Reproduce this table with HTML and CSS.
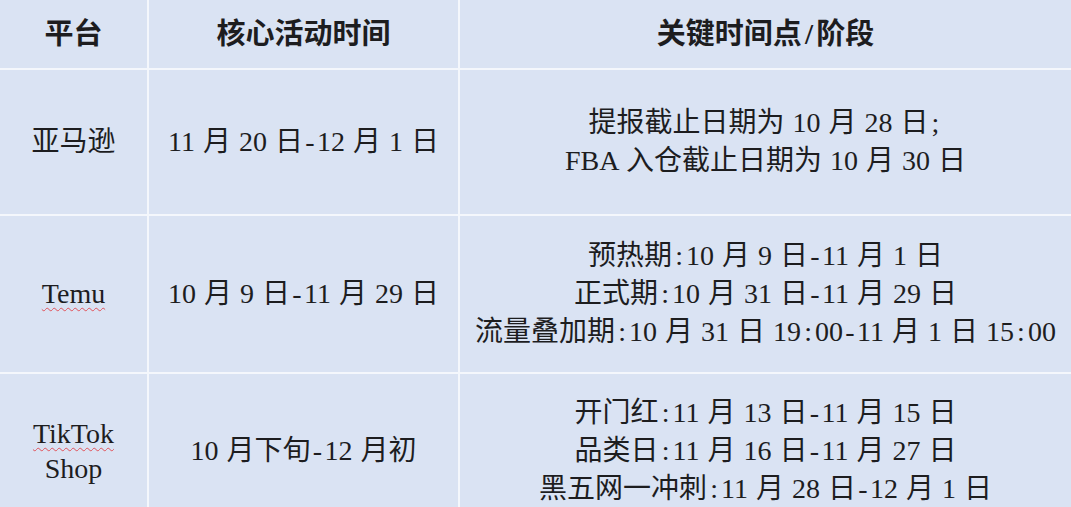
FILE: index.html
```html
<!DOCTYPE html>
<html lang="zh-CN">
<head>
<meta charset="utf-8">
<title>平台活动时间</title>
<link rel="stylesheet" href="styles.css">
</head>
<body>
<div class="table">
  <div class="cell head"><div>平台</div></div>
  <div class="cell head"><div>核心活动时间</div></div>
  <div class="cell head"><div>关键时间点<span class="hw">/</span>阶段</div></div>

  <div class="cell"><div>亚马逊</div></div>
  <div class="cell"><div>11 月 20 日<span class="hw">-</span>12 月 1 日</div></div>
  <div class="cell">
    <div>提报截止日期为 10 月 28 日<span class="hw">;</span></div>
    <div>FBA 入仓截止日期为 10 月 30 日</div>
  </div>

  <div class="cell"><div><span class="spell">Temu</span></div></div>
  <div class="cell"><div>10 月 9 日<span class="hw">-</span>11 月 29 日</div></div>
  <div class="cell">
    <div>预热期<span class="hw">:</span>10 月 9 日<span class="hw">-</span>11 月 1 日</div>
    <div>正式期<span class="hw">:</span>10 月 31 日<span class="hw">-</span>11 月 29 日</div>
    <div>流量叠加期<span class="hw">:</span>10 月 31 日 19<span class="hw">:</span>00<span class="hw">-</span>11 月 1 日 15<span class="hw">:</span>00</div>
  </div>

  <div class="cell brand"><div><span class="spell">TikTok</span></div><div>Shop</div></div>
  <div class="cell"><div>10 月下旬<span class="hw">-</span>12 月初</div></div>
  <div class="cell">
    <div>开门红<span class="hw">:</span>11 月 13 日<span class="hw">-</span>11 月 15 日</div>
    <div>品类日<span class="hw">:</span>11 月 16 日<span class="hw">-</span>11 月 27 日</div>
    <div>黑五网一冲刺<span class="hw">:</span>11 月 28 日<span class="hw">-</span>12 月 1 日</div>
  </div>
</div>
</body>
</html>
```

FILE: styles.css
```css
html, body {
  margin: 0;
  padding: 0;
  overflow: hidden;
  background: #f4f7fc;
}

body {
  font-family: "Liberation Serif", "Noto Sans CJK SC", serif;
  color: #1d1d1f;
  font-size: 28px;
}

.table {
  display: grid;
  grid-template-columns: 147px 309px 1fr;
  grid-template-rows: 68px 144px 156px 154px;
  gap: 2px;
  background: #f4f7fc;
  width: 1071px;
}

.cell {
  background: #dae3f3;
  display: flex;
  flex-direction: column;
  align-items: center;
  justify-content: center;
  text-align: center;
  white-space: nowrap;
  word-spacing: 1px;
  line-height: 38px;
}

.head {
  font-weight: 700;
  font-size: 29px;
}

.hw {
  display: inline-block;
  width: 0.5em;
  text-align: center;
}

.brand {
  line-height: 35px;
}

.spell {
  text-decoration: underline wavy #e0525a;
  text-decoration-thickness: 1px;
  text-underline-offset: 4px;
}
```
